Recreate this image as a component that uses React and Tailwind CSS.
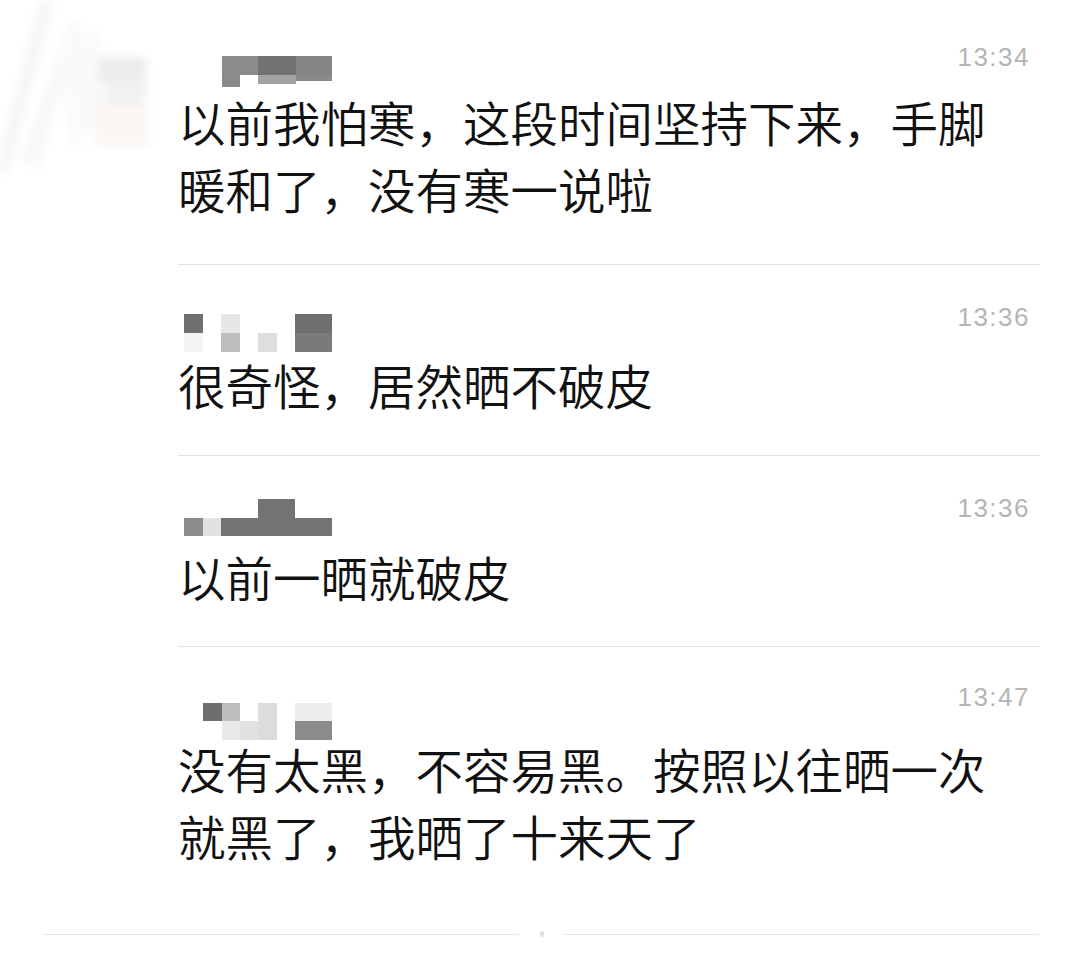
import React from "react";

const CJK = { fontFamily: '"Noto Sans CJK SC", "Noto Sans", sans-serif' };
const LAT = { fontFamily: '"Liberation Sans", Arial, sans-serif' };

function Mosaic({ cells, h }) {
  return (
    <svg width="154" height={h} viewBox={`0 0 154 ${h}`} className="block">
      {cells.map((c, i) => (
        <rect key={i} x={c[0]} y={c[1]} width={c[2]} height={c[3]} fill={c[4]} />
      ))}
    </svg>
  );
}

function Avatar() {
  return (
    <svg width="160" height="180" viewBox="0 0 160 180" className="block">
      <defs>
        <filter id="bl" x="-20%" y="-20%" width="140%" height="140%">
          <feGaussianBlur stdDeviation="4" />
        </filter>
      </defs>
      <g filter="url(#bl)">
        <polygon points="0,150 40,0 55,0 10,170 0,175" fill="#f6f6f6" />
        <polygon points="20,160 70,20 82,25 38,170" fill="#f8f8f8" />
        <polygon points="60,40 100,30 110,120 70,150" fill="#fafafa" />
        <rect x="95" y="56" width="53" height="90" fill="#f8f8f8" />
        <rect x="100" y="58" width="45" height="24" fill="#ececec" />
        <rect x="108" y="84" width="36" height="20" fill="#f1f1f1" />
        <rect x="98" y="105" width="50" height="40" fill="#faf6f3" />
      </g>
    </svg>
  );
}

function Time({ t }) {
  return (
    <div
      className="text-[26px] leading-[26px] tracking-[1.5px] text-[#b5b5b5] mr-[10px]"
      style={LAT}
    >
      {t}
    </div>
  );
}

function Item({ pt, nameMt, name, nameH, textMt, pb, time, lines, border, avatar }) {
  return (
    <div className="flex">
      <div className="w-[178px] shrink-0">{avatar ? <Avatar /> : null}</div>
      <div
        className={`flex-1 mr-[40px] ${border ? "border-b border-[#e3e3e3]" : ""}`}
        style={{ paddingTop: pt, paddingBottom: pb }}
      >
        <div className="flex justify-between items-start">
          <div style={{ marginTop: nameMt }}>
            <Mosaic cells={name} h={nameH} />
          </div>
          <Time t={time} />
        </div>
        <div
          className="text-[47.5px] leading-[67px] font-[350] text-[#111111]"
          style={{ ...CJK, marginTop: textMt }}
        >
          {lines.map((l, i) => (
            <div key={i} className="whitespace-nowrap">{l}</div>
          ))}
        </div>
      </div>
    </div>
  );
}

const n1 = [
  [44, 0, 36, 19, "#8c8c8c"],
  [80, 0, 38, 19, "#727272"],
  [118, 0, 36, 19, "#858585"],
  [44, 19, 18, 12, "#8a8a8a"],
  [80, 19, 38, 9, "#a3a3a3"],
  [118, 19, 36, 6, "#8a8a8a"],
];
const n2 = [
  [6, 0, 19, 19, "#707070"],
  [6, 19, 19, 19, "#f4f4f4"],
  [43, 0, 19, 19, "#e6e6e6"],
  [43, 19, 19, 19, "#bebebe"],
  [80, 19, 19, 19, "#dedede"],
  [117, 0, 37, 19, "#6f6f6f"],
  [117, 19, 37, 19, "#7a7a7a"],
];
const n3 = [
  [80, 0, 37, 19, "#737373"],
  [6, 19, 19, 18, "#8c8c8c"],
  [25, 19, 18, 18, "#e2e2e2"],
  [43, 19, 111, 18, "#737373"],
];
const n4 = [
  [25, 0, 19, 18, "#6e6e6e"],
  [44, 0, 18, 18, "#bdbdbd"],
  [44, 18, 18, 19, "#e9e9e9"],
  [62, 18, 18, 19, "#e2e2e2"],
  [80, 0, 19, 37, "#dcdcdc"],
  [117, 0, 37, 18, "#ececec"],
  [117, 18, 37, 19, "#8c8c8c"],
];

export default function App() {
  return (
    <div className="w-[1080px] h-[970px] bg-white overflow-hidden">
      <Item
        avatar
        pt={44}
        nameMt={12}
        name={n1}
        nameH={31}
        textMt={1}
        pb={42}
        time="13:34"
        lines={["以前我怕寒，这段时间坚持下来，手脚", "暖和了，没有寒一说啦"]}
        border
      />
      <Item
        pt={39}
        nameMt={10}
        name={n2}
        nameH={38}
        textMt={-1}
        pb={37}
        time="13:36"
        lines={["很奇怪，居然晒不破皮"]}
        border
      />
      <Item
        pt={39}
        nameMt={4}
        name={n3}
        nameH={37}
        textMt={7}
        pb={36}
        time="13:36"
        lines={["以前一晒就破皮"]}
        border
      />
      <Item
        pt={37}
        nameMt={19}
        name={n4}
        nameH={37}
        textMt={-5}
        pb={0}
        time="13:47"
        lines={["没有太黑，不容易黑。按照以往晒一次", "就黑了，我晒了十来天了"]}
      />
      <div className="flex items-center h-[6px] mt-[62px] pl-[43px]">
        <div className="w-[476px] h-px bg-[#e6e6e6]" />
        <div className="w-[4px] h-[6px] rounded-full bg-[#e0e0e0] ml-[21px]" />
        <div className="w-[475px] h-px bg-[#e6e6e6] ml-[20px]" />
      </div>
    </div>
  );
}
